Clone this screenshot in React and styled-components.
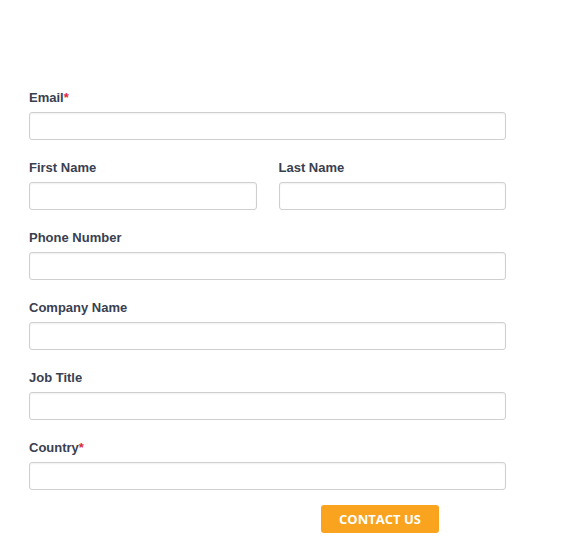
import React from "react";
import styled, { createGlobalStyle } from "styled-components";

const Global = createGlobalStyle`
  html, body { margin: 0; padding: 0; background: #fff; }
  body { font-family: "Liberation Sans", Arial, sans-serif; }
`;

const Form = styled.form`
  width: 477px;
  padding: 90px 0 0 29px;
  display: flex;
  flex-direction: column;
`;

const Row = styled.div`
  display: flex;
  gap: 22px;
  & + & { margin-top: 20px; }
`;

const Field = styled.div`
  flex: 1;
  display: flex;
  flex-direction: column;
`;

const Label = styled.label`
  font-size: 13px;
  font-weight: bold;
  color: #39404f;
  line-height: 16px;
  height: 16px;
  margin-bottom: 6px;
`;

const Req = styled.span`
  color: #e0283a;
`;

const Input = styled.input`
  box-sizing: border-box;
  height: 28px;
  width: 100%;
  border: 1px solid #cfcfcf;
  border-radius: 3px;
  background: #fff;
  box-shadow: inset 0 1px 2px rgba(0,0,0,0.06);
  outline: none;
  padding: 0 8px;
`;

const Actions = styled.div`
  display: flex;
  padding-left: 292px;
  margin-top: 15px;
`;

const Button = styled.button`
  width: 118px;
  height: 28px;
  border: none;
  border-radius: 3px;
  background: #f9a31e;
  color: #fff;
  font-family: "Open Sans", "Liberation Sans", sans-serif;
  font-weight: 700;
  font-size: 13px;
  text-transform: uppercase;
  cursor: pointer;
`;

const F = ({ label, req }) => (
  <Field>
    <Label>
      {label}
      {req && <Req>*</Req>}
    </Label>
    <Input />
  </Field>
);

export default function App() {
  return (
    <>
      <Global />
      <Form onSubmit={(e) => e.preventDefault()}>
        <Row><F label="Email" req /></Row>
        <Row>
          <F label="First Name" />
          <F label="Last Name" />
        </Row>
        <Row><F label="Phone Number" /></Row>
        <Row><F label="Company Name" /></Row>
        <Row><F label="Job Title" /></Row>
        <Row><F label="Country" req /></Row>
        <Actions>
          <Button type="submit">Contact Us</Button>
        </Actions>
      </Form>
    </>
  );
}
